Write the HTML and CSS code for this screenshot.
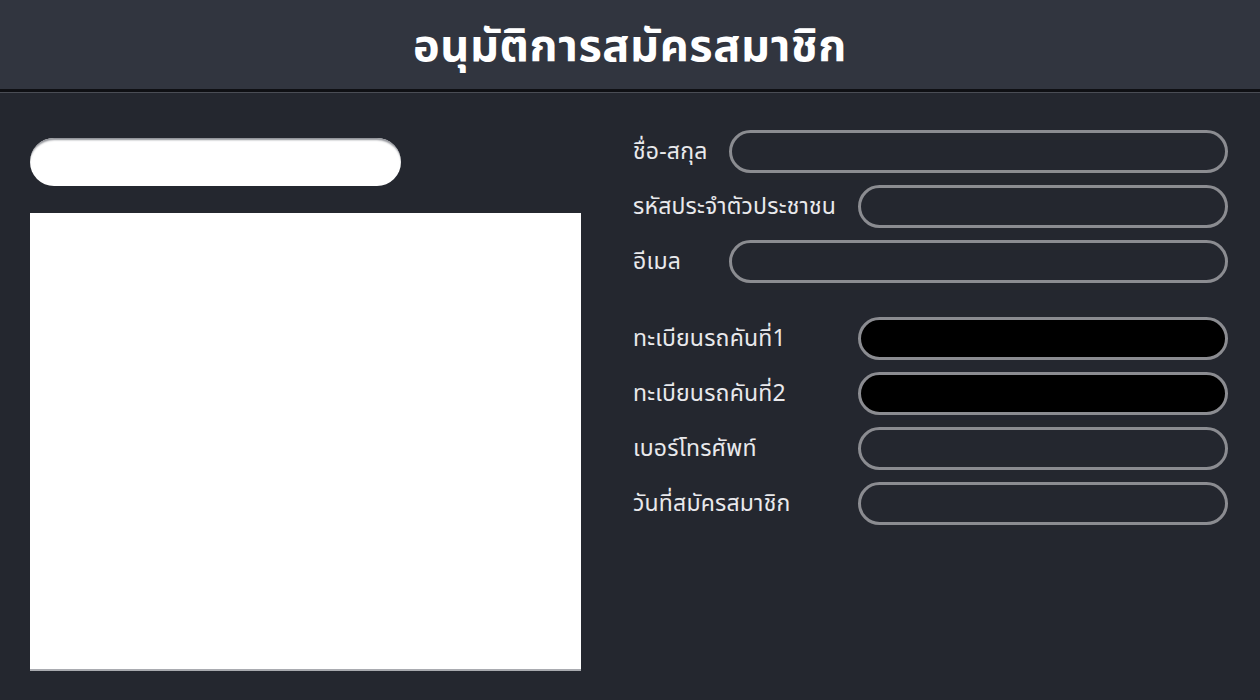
FILE: index.html
```html
<!DOCTYPE html>
<html lang="th">
<head>
<meta charset="utf-8">
<link rel="stylesheet" href="styles.css">
</head>
<body>
<header class="topbar">
  <h1 class="title">อนุมัติการสมัครสมาชิก</h1>
</header>
<main class="content">
  <section class="left">
    <div class="search-pill"></div>
    <div class="photo"></div>
  </section>
  <section class="right">
    <div class="group">
      <div class="row"><label class="lbl lbl-short">ชื่อ-สกุล</label><div class="field"></div></div>
      <div class="row"><label class="lbl lbl-long">รหัสประจำตัวประชาชน</label><div class="field"></div></div>
      <div class="row"><label class="lbl lbl-short">อีเมล</label><div class="field"></div></div>
    </div>
    <div class="group">
      <div class="row"><label class="lbl lbl-long">ทะเบียนรถคันที่1</label><div class="field dark"></div></div>
      <div class="row"><label class="lbl lbl-long">ทะเบียนรถคันที่2</label><div class="field dark"></div></div>
      <div class="row"><label class="lbl lbl-long">เบอร์โทรศัพท์</label><div class="field"></div></div>
      <div class="row"><label class="lbl lbl-long">วันที่สมัครสมาชิก</label><div class="field"></div></div>
    </div>
  </section>
</main>
</body>
</html>
```

FILE: styles.css
```css
* { box-sizing: border-box; }
html, body { margin: 0; padding: 0; }
body {
  width: 1260px;
  height: 700px;
  background: #24272f;
  font-family: "Noto Sans Thai", "Noto Sans", "Liberation Sans", sans-serif;
  color: #ffffff;
  overflow: hidden;
}
.topbar {
  height: 92px;
  background: #31353f;
  border-bottom: 3px solid #0f1014;
  box-shadow: 0 1px 0 #4a4d55;
  display: flex;
  align-items: center;
  justify-content: center;
}
.title {
  margin: 0;
  font-size: 45px;
  font-weight: 700;
  color: #ffffff;
  padding-top: 4px;
  letter-spacing: 0.6px;
}
.content {
  display: flex;
  padding: 38px 32px 0 30px;
}
.left {
  width: 551px;
  display: flex;
  flex-direction: column;
  padding-top: 8px;
}
.search-pill {
  width: 371px;
  height: 48px;
  background: #ffffff;
  border-radius: 24px;
  box-shadow: inset 0 3px 2px -1px #8e9096;
}
.photo {
  margin-top: 27px;
  width: 551px;
  height: 458px;
  background: #ffffff;
  border-bottom: 2px solid #a9abb0;
}
.right {
  margin-left: 52px;
  flex: 1;
  display: flex;
  flex-direction: column;
  gap: 34px;
}
.group {
  display: flex;
  flex-direction: column;
  gap: 12px;
}
.row {
  display: flex;
  align-items: center;
  height: 43px;
}
.lbl {
  flex: none;
  font-size: 23px;
  color: #e9e9ec;
  white-space: nowrap;
  padding-right: 14px;
  letter-spacing: 0.2px;
}
.lbl-short { width: 96px; }
.lbl-long { width: 225px; }
.field {
  flex: 1;
  height: 43px;
  border: 3px solid #8b8c91;
  border-radius: 22px;
  background: transparent;
}
.field.dark { background: #000000; }
```
